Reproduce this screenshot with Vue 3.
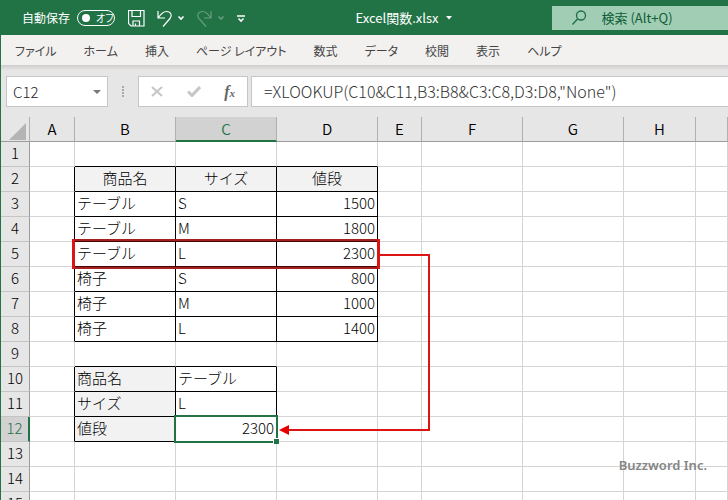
<template>
    <div class="window">
        <header class="title-bar">
            <label class="autosave">
                <span>自動保存</span>
                <input v-model="autosave" type="checkbox" class="autosave-input" />
                <span class="toggle"><span class="knob"></span><span class="toggle-text">オフ</span></span>
            </label>
            <div class="quick-access">
                <button class="icon-button save" aria-label="上書き保存">
                    <svg width="17" height="17" viewBox="0 0 17 17">
                        <path d="M.5.5h15.500v15.500H3L.5 13.500zM4 .5v6h8.500v-6M5 16v-5h6.500v5M7.500 16v-2.500" />
                    </svg>
                </button>
                <button class="icon-button undo" aria-label="元に戻す">
                    <svg width="28" height="18" viewBox="0 0 28 18">
                        <path d="M1 1v7h7M1.500 7.500C4.500 3 7 1.500 9.500 1.500c4.500 0 6 4 3.500 7L6 16.500" />
                        <path class="thick" d="M21.500 6.500L24 9l2.500-2.500" />
                    </svg>
                </button>
                <button class="icon-button redo" aria-label="やり直し" disabled>
                    <svg width="28" height="18" viewBox="0 0 28 18">
                        <path d="M14 1v7H7M13.500 7.500C10.500 3 8 1.500 5.500 1.500c-4.500 0-6 4-3.500 7L9 16.500" />
                        <path class="thick" d="M21.500 6.500L24 9l2.500-2.500" />
                    </svg>
                </button>
                <button class="icon-button customize" aria-label="クイック アクセス ツール バーのカスタマイズ">
                    <svg width="8" height="8" viewBox="0 0 8 8">
                        <path class="thick" d="M0 1h8M1.500 3.500L4 6l2.500-2.500" />
                    </svg>
                </button>
            </div>
            <button class="file-name">
                Excel関数.xlsx
                <svg width="6" height="4" viewBox="0 0 6 4"><path d="M0 0h6L3 3.500z" /></svg>
            </button>
            <label class="search">
                <svg width="15" height="15" viewBox="0 0 15 15">
                    <circle cx="9" cy="5.500" r="4.500" />
                    <path d="M5.500 9L.5 14.500" />
                </svg>
                <input type="search" placeholder="検索 (Alt+Q)" aria-label="検索" />
            </label>
        </header>

        <nav class="ribbon-tabs">
            <button v-for="tab in tabs" :key="tab">{{ tab }}</button>
        </nav>

        <div class="formula-bar">
            <div class="name-box">
                <input v-model="activeCell" aria-label="名前ボックス" />
                <svg width="8" height="4" viewBox="0 0 8 4"><path d="M0 0h8L4 4z" /></svg>
            </div>
            <div class="grip"><i></i><i></i><i></i><i></i></div>
            <div class="formula-actions">
                <button aria-label="キャンセル">
                    <svg width="12" height="11" viewBox="0 0 12 11"><path d="M1 1l10 9M11 1L1 10" /></svg>
                </button>
                <button aria-label="入力">
                    <svg width="14" height="11" viewBox="0 0 14 11"><path class="check" d="M1 5.500l4 4L13 1" /></svg>
                </button>
                <button class="fx" aria-label="関数の挿入">f<small>x</small></button>
            </div>
            <input v-model="formula" class="formula-input" aria-label="数式バー" />
        </div>

        <main class="sheet">
            <table>
                <colgroup>
                    <col class="col-head" />
                    <col v-for="c in columns" :key="c" :class="'col-' + c.toLowerCase()" />
                    <col />
                </colgroup>
                <thead>
                    <tr>
                        <th class="corner"><svg width="17" height="17" viewBox="0 0 17 17"><path d="M17 0v17H0z" /></svg></th>
                        <th v-for="c in columns" :key="c" scope="col" :class="{ active: c === 'C' }">{{ c }}</th>
                        <th></th>
                    </tr>
                </thead>
                <tbody>
                    <tr v-for="r in 15" :key="r">
                        <th scope="row" :class="{ active: r === 12 }">{{ r }}</th>
                        <td v-for="c in columns" :key="c" :class="cellClass(c, r)">{{ cells[c + r] }}</td>
                        <td></td>
                    </tr>
                </tbody>
            </table>

            <div class="selection"><span class="fill-handle"></span></div>

            <!-- 5行目から結果セルへの矢印 -->
            <svg class="marks" width="440" height="330" viewBox="0 0 440 330">
                <path class="mark-row" d="M72 123h306M72 151h306" />
                <path class="mark-inner" d="M73 124.500h304M73 149.500h304" />
                <path class="mark-side" d="M72.500 122v30M377.500 122v30" />
                <path class="mark-line" d="M378 138h50v175H286" />
                <path class="mark-head" d="M278 313l10-5v10z" />
            </svg>
            <span class="credit">Buzzword Inc.</span>
        </main>
    </div>
</template>

<script setup>
import { ref } from 'vue';

const autosave = ref(false);
const activeCell = ref('C12');
const formula = ref('=XLOOKUP(C10&C11,B3:B8&C3:C8,D3:D8,"None")');

const tabs = ['ファイル', 'ホーム', '挿入', 'ページ レイアウト', '数式', 'データ', '校閲', '表示', 'ヘルプ'];
const columns = ['A', 'B', 'C', 'D', 'E', 'F', 'G', 'H'];

const cells = {
    B2: '商品名', C2: 'サイズ', D2: '値段',
    B3: 'テーブル', C3: 'S', D3: 1500,
    B4: 'テーブル', C4: 'M', D4: 1800,
    B5: 'テーブル', C5: 'L', D5: 2300,
    B6: '椅子', C6: 'S', D6: 800,
    B7: '椅子', C7: 'M', D7: 1000,
    B8: '椅子', C8: 'L', D8: 1400,
    B10: '商品名', C10: 'テーブル',
    B11: 'サイズ', C11: 'L',
    B12: '値段', C12: 2300,
};

// 罫線は右と下だけに引くので、表の外側の左・上は隣のセルが受け持つ
function cellClass(c, r) {
    const upper = r >= 2 && r <= 8;
    const lower = r >= 10 && r <= 12;
    const inUpper = 'BCD'.includes(c);
    const inLower = 'BC'.includes(c);
    return {
        'line-right': (upper && 'ABCD'.includes(c)) || (lower && 'ABC'.includes(c)),
        'line-bottom': (inUpper && r >= 1 && r <= 8) || (inLower && r >= 9 && r <= 12),
        shaded: (inUpper && r === 2) || (lower && c === 'B'),
        center: r === 2,
        number: typeof cells[c + r] === 'number',
    };
}
</script>

<style>
body {
    margin: 0;
}
</style>

<style scoped>
.window {
    display: flex;
    flex-direction: column;
    height: 100vh;
    box-sizing: border-box;
    overflow: hidden;
    border-left: 1px solid #217346;
    background: #fff;
    font-family: "Noto Sans CJK JP", sans-serif;
    font-size: 13px;
}

button,
input {
    font: inherit;
    color: inherit;
    border: 0;
    padding: 0;
    margin: 0;
    background: none;
    outline: none;
}

svg {
    display: block;
    fill: none;
}

.title-bar {
    display: flex;
    align-items: center;
    flex: none;
    height: 35px;
    padding-left: 21px;
    background: #217346;
    color: #fff;
}

.autosave {
    display: flex;
    align-items: center;
    gap: 7px;
    font-size: 12px;
}

.autosave-input {
    position: absolute;
    opacity: 0;
}

.toggle {
    display: flex;
    align-items: center;
    gap: 6px;
    box-sizing: border-box;
    width: 38px;
    height: 16px;
    padding-left: 4px;
    border: 1px solid #fff;
    border-radius: 8px;
}

.knob {
    width: 8px;
    height: 8px;
    border-radius: 50%;
    background: #fff;
}

.toggle-text {
    font-size: 10px;
    font-feature-settings: "palt";
}

.quick-access {
    display: flex;
    align-items: center;
    gap: 12px;
    flex: 1;
    padding: 2px 0 0 13px;
}

.icon-button path {
    stroke: #fff;
    stroke-width: 1.2;
}

.icon-button .thick {
    stroke-width: 1.6;
}

.redo {
    opacity: 0.3;
}

.file-name {
    display: flex;
    align-items: center;
    gap: 7px;
}

.file-name path {
    fill: #fff;
}

.search {
    display: flex;
    align-items: center;
    gap: 15px;
    box-sizing: border-box;
    width: 25%;
    height: 24px;
    margin-left: 100px;
    padding-left: 20px;
    background: #a0cdb4;
    color: #0f5c36;
}

.search svg {
    flex: none;
    stroke: #1d6f45;
    stroke-width: 1.3;
}

.search input {
    width: 100%;
    min-width: 0;
}

.search input::placeholder {
    color: #0f5c36;
    opacity: 1;
}

.ribbon-tabs {
    display: flex;
    flex: none;
    gap: 27px;
    height: 30px;
    padding-left: 14px;
    background: #f3f1f0;
    color: #444;
    font-size: 12px;
    white-space: nowrap;
    font-feature-settings: "palt";
}

.formula-bar {
    display: flex;
    flex: none;
    box-sizing: border-box;
    height: 52px;
    padding: 11px 0 10px 5px;
    background: linear-gradient(#cfcdcc, #e6e6e6 5px);
}

.name-box,
.formula-actions,
.formula-input {
    box-sizing: border-box;
    border: 1px solid #c6c6c6;
    background: #fff;
}

.name-box {
    display: flex;
    align-items: center;
    width: 102px;
    padding: 0 6px;
    font-size: 15px;
    font-weight: 300;
    color: #222;
}

.name-box input {
    flex: 1;
    min-width: 0;
}

.name-box path {
    fill: #777;
}

.grip {
    display: flex;
    flex-direction: column;
    justify-content: center;
    align-items: center;
    gap: 1px;
    width: 30px;
}

.grip i {
    width: 2px;
    height: 2px;
    background: #aaa;
}

.formula-actions {
    display: flex;
    align-items: center;
    justify-content: space-between;
    width: 110px;
    margin-right: 3px;
    padding: 0 12px;
}

.formula-actions path {
    stroke: #c6c6c6;
    stroke-width: 2;
}

.formula-actions .check {
    stroke-width: 3;
}

.fx {
    font-family: "Liberation Serif", serif;
    font-size: 16px;
    font-style: italic;
    font-weight: 700;
    color: #666;
}

.fx small {
    font-size: 11px;
}

.formula-input {
    flex: 1;
    min-width: 0;
    padding: 0 0 2px 12px;
    border-right: 0;
    font-size: 16px;
    font-weight: 300;
    color: #333;
}

.sheet {
    position: relative;
    flex: 1;
    min-height: 0;
    overflow: hidden;
}

table {
    width: 100%;
    table-layout: fixed;
    border-collapse: separate;
    border-spacing: 0;
    font-size: 15px;
    line-height: 24px;
}

.col-head {
    width: 29px;
}

.col-a {
    width: 45px;
}

.col-b,
.col-c,
.col-d,
.col-f,
.col-g {
    width: 101px;
}

.col-e {
    width: 44px;
}

.col-h {
    width: 72px;
}

th,
td {
    box-sizing: border-box;
    height: 25px;
    padding: 0 2px;
    border-right: 1px solid #d4d4d4;
    border-bottom: 1px solid #d4d4d4;
    text-align: left;
    font-weight: 300;
    color: #000;
    white-space: nowrap;
}

th {
    padding: 0;
    background: #e6e6e6;
    border-color: #c4c4c4;
    text-align: center;
}

thead th {
    border-right-color: #b0b0b0;
    border-bottom-color: #9b9b9b;
    font-weight: 350;
}

tbody th {
    border-right-color: #9b9b9b;
}

tbody th,
tbody td {
    line-height: 22px;
    vertical-align: top;
}

.corner svg {
    margin: 4px 3px 0 auto;
}

.corner path {
    fill: #b4b4b4;
}

th.active {
    background: #d2d2d2;
    color: #217346;
}

thead th.active {
    border-bottom: 2px solid #217346;
    line-height: 23px;
}

tbody th.active {
    border-right: 2px solid #217346;
}

.line-right {
    border-right-color: #000;
}

.line-bottom {
    border-bottom-color: #000;
}

.shaded {
    background: #f2f2f2;
}

.center {
    text-align: center;
}

.number {
    text-align: right;
}

.selection {
    position: absolute;
    left: 173px;
    top: 298px;
    box-sizing: border-box;
    width: 104px;
    height: 28px;
    border: 2px solid #217346;
}

.fill-handle {
    position: absolute;
    right: -3px;
    bottom: -3px;
    width: 5px;
    height: 5px;
    border-top: 1px solid #fff;
    border-left: 1px solid #fff;
    background: #217346;
}

.marks {
    position: absolute;
    left: 0;
    top: 0;
}

.marks path {
    stroke-width: 2;
}

.mark-row {
    stroke: #a3201f;
}

.marks .mark-inner {
    stroke: #4a0505;
    stroke-width: 1;
}

.mark-side,
.mark-line {
    stroke: #dc1414;
}

.marks .mark-side {
    stroke-width: 3;
}

.marks .mark-head {
    fill: #e60000;
    stroke: none;
}

.credit {
    position: absolute;
    right: 21px;
    bottom: 26px;
    font-family: "Noto Sans", sans-serif;
    font-size: 13px;
    font-weight: 600;
    line-height: 18px;
    color: #858585;
}
</style>
